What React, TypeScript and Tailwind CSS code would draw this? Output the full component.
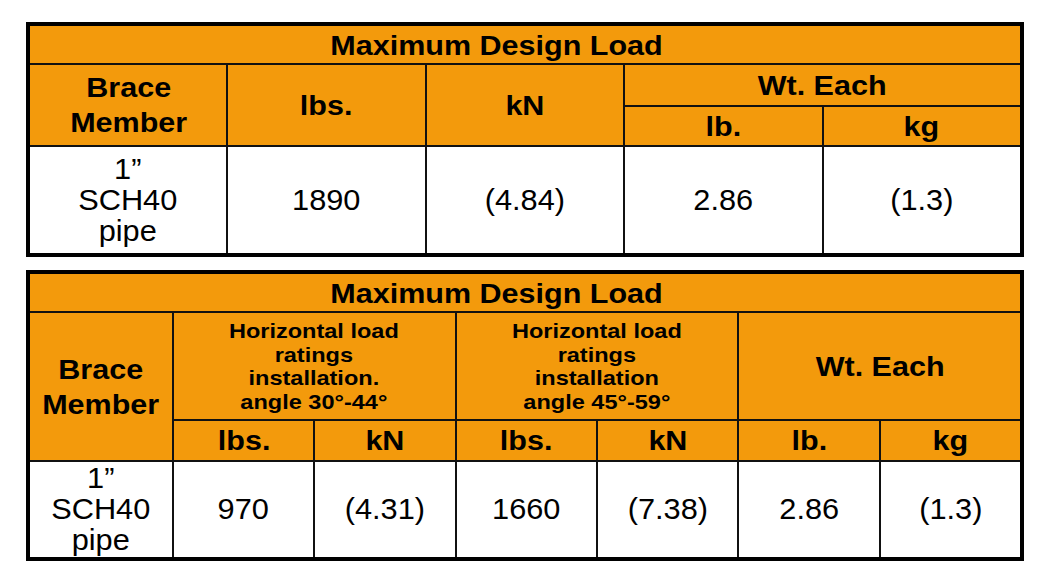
import React from 'react';

const font = { fontFamily: '"Liberation Sans", Arial, sans-serif' };

// the source picture is stretched sideways, so the text is widened to match
const Bold: React.FC<{ children: React.ReactNode; className?: string }> = ({ children, className = '' }) => (
    <span className={`inline-block origin-center scale-x-[1.09] font-bold text-[28px] leading-[35px] text-black ${className}`}>
        {children}
    </span>
);

const Plain: React.FC<{ children: React.ReactNode }> = ({ children }) => (
    <span className="inline-block origin-center scale-x-[1.06] text-[29px] leading-[31px] text-black">
        {children}
    </span>
);

const Head: React.FC<{ children: React.ReactNode; className?: string }> = ({ children, className = '' }) => (
    <div className={`bg-[#f39a0c] flex items-center justify-center text-center ${className}`}>{children}</div>
);

const Cell: React.FC<{ children: React.ReactNode; className?: string }> = ({ children, className = '' }) => (
    <div className={`bg-white flex items-center justify-center text-center ${className}`}>{children}</div>
);

const PipeLabel = () => (
    <Plain>
        1”<br />SCH40<br />pipe
    </Plain>
);

const AngleHeader: React.FC<{ lines: string[] }> = ({ lines }) => (
    <span className="inline-block origin-center scale-x-[1.12] font-bold text-[21px] leading-[23.5px] text-black">
        {lines.map((l, i) => (
            <div key={i}>{l}</div>
        ))}
    </span>
);

function SimpleTable() {
    return (
        <div className="grid grid-cols-5 grid-rows-[37px_40px_38px_106px] gap-[2px] bg-[#111] border-4 border-black">
            <Head className="col-span-5 pt-[2px] pr-[58px]">
                <Bold>Maximum Design Load</Bold>
            </Head>
            <Head className="row-span-2">
                <Bold>Brace<br />Member</Bold>
            </Head>
            <Head className="row-span-2">
                <Bold>lbs.</Bold>
            </Head>
            <Head className="row-span-2">
                <Bold>kN</Bold>
            </Head>
            <Head className="col-span-2">
                <Bold>Wt. Each</Bold>
            </Head>
            <Head>
                <Bold>lb.</Bold>
            </Head>
            <Head>
                <Bold>kg</Bold>
            </Head>
            <Cell><PipeLabel /></Cell>
            <Cell><Plain>1890</Plain></Cell>
            <Cell><Plain>(4.84)</Plain></Cell>
            <Cell><Plain>2.86</Plain></Cell>
            <Cell><Plain>(1.3)</Plain></Cell>
        </div>
    );
}

function AngleTable() {
    return (
        <div className="grid grid-cols-[142px_repeat(6,1fr)] grid-rows-[37px_106px_39px_95px] gap-[2px] bg-[#111] border-4 border-black">
            <Head className="col-span-7 pt-[2px] pr-[58px]">
                <Bold>Maximum Design Load</Bold>
            </Head>
            <Head className="row-span-2">
                <Bold>Brace<br />Member</Bold>
            </Head>
            <Head className="col-span-2">
                <AngleHeader lines={['Horizontal load', 'ratings', 'installation.', 'angle 30°-44°']} />
            </Head>
            <Head className="col-span-2">
                <AngleHeader lines={['Horizontal load', 'ratings', 'installation', 'angle 45°-59°']} />
            </Head>
            <Head className="col-span-2">
                <Bold>Wt. Each</Bold>
            </Head>
            <Head><Bold>lbs.</Bold></Head>
            <Head><Bold>kN</Bold></Head>
            <Head><Bold>lbs.</Bold></Head>
            <Head><Bold>kN</Bold></Head>
            <Head><Bold>lb.</Bold></Head>
            <Head><Bold>kg</Bold></Head>
            <Cell><PipeLabel /></Cell>
            <Cell><Plain>970</Plain></Cell>
            <Cell><Plain>(4.31)</Plain></Cell>
            <Cell><Plain>1660</Plain></Cell>
            <Cell><Plain>(7.38)</Plain></Cell>
            <Cell><Plain>2.86</Plain></Cell>
            <Cell><Plain>(1.3)</Plain></Cell>
        </div>
    );
}

export default function App() {
    return (
        <div className="w-[1053px] h-[575px] bg-white pl-[26px] pt-[22px]" style={font}>
            <div className="w-[998px] flex flex-col gap-[13px]">
                <SimpleTable />
                <AngleTable />
            </div>
        </div>
    );
}
